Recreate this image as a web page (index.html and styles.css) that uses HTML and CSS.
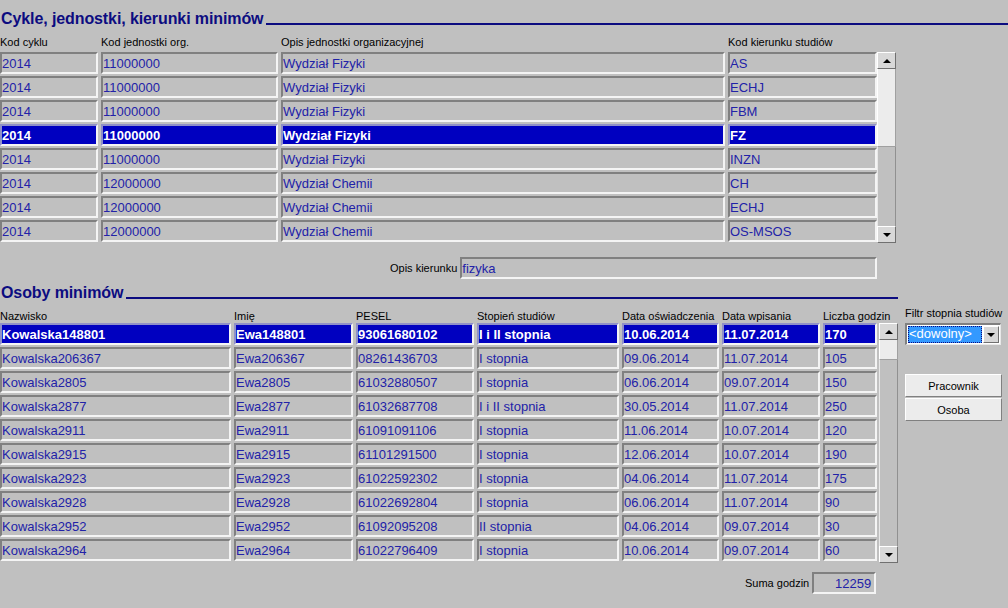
FILE: index.html
```html
<!DOCTYPE html>
<html lang="pl">
<head>
  <meta charset="UTF-8">
  <title>Cykle, jednostki, kierunki minimów</title>
  <link rel="stylesheet" href="styles.css">
</head>
<body>

<div class="section-title top-title">
  <span>Cykle, jednostki, kierunki minimów</span>
  <div class="title-line"></div>
</div>

<div class="block block-top">
  <div class="grid grid-top">
    <div class="hdr">Kod cyklu</div>
    <div class="hdr">Kod jednostki org.</div>
    <div class="hdr">Opis jednostki organizacyjnej</div>
    <div class="hdr">Kod kierunku studiów</div>

    <div class="fld">2014</div><div class="fld">11000000</div><div class="fld">Wydział Fizyki</div><div class="fld">AS</div>
    <div class="fld">2014</div><div class="fld">11000000</div><div class="fld">Wydział Fizyki</div><div class="fld">ECHJ</div>
    <div class="fld">2014</div><div class="fld">11000000</div><div class="fld">Wydział Fizyki</div><div class="fld">FBM</div>
    <div class="fld sel">2014</div><div class="fld sel">11000000</div><div class="fld sel">Wydział Fizyki</div><div class="fld sel">FZ</div>
    <div class="fld">2014</div><div class="fld">11000000</div><div class="fld">Wydział Fizyki</div><div class="fld">INZN</div>
    <div class="fld">2014</div><div class="fld">12000000</div><div class="fld">Wydział Chemii</div><div class="fld">CH</div>
    <div class="fld">2014</div><div class="fld">12000000</div><div class="fld">Wydział Chemii</div><div class="fld">ECHJ</div>
    <div class="fld">2014</div><div class="fld">12000000</div><div class="fld">Wydział Chemii</div><div class="fld">OS-MSOS</div>
  </div>

  <div class="scrollbar scroll-top">
    <div class="sb-btn"><span class="arrow-up"></span></div>
    <div class="sb-light sb-light-top"></div>
    <div class="sb-track"></div>
    <div class="sb-btn"><span class="arrow-down"></span></div>
  </div>
</div>

<div class="opis-row">
  <span class="lbl">Opis kierunku</span>
  <div class="fld opis-fld">fizyka</div>
</div>

<div class="section-title bottom-title">
  <span>Osoby minimów</span>
  <div class="title-line"></div>
</div>

<div class="block block-bottom">
  <div class="grid grid-bottom">
    <div class="hdr">Nazwisko</div>
    <div class="hdr">Imię</div>
    <div class="hdr">PESEL</div>
    <div class="hdr">Stopień studiów</div>
    <div class="hdr">Data oświadczenia</div>
    <div class="hdr">Data wpisania</div>
    <div class="hdr">Liczba godzin</div>

    <div class="fld sel">Kowalska148801</div><div class="fld sel">Ewa148801</div><div class="fld sel">93061680102</div><div class="fld sel">I i II stopnia</div><div class="fld sel">10.06.2014</div><div class="fld sel">11.07.2014</div><div class="fld sel">170</div>
    <div class="fld">Kowalska206367</div><div class="fld">Ewa206367</div><div class="fld">08261436703</div><div class="fld">I stopnia</div><div class="fld">09.06.2014</div><div class="fld">11.07.2014</div><div class="fld">105</div>
    <div class="fld">Kowalska2805</div><div class="fld">Ewa2805</div><div class="fld">61032880507</div><div class="fld">I stopnia</div><div class="fld">06.06.2014</div><div class="fld">09.07.2014</div><div class="fld">150</div>
    <div class="fld">Kowalska2877</div><div class="fld">Ewa2877</div><div class="fld">61032687708</div><div class="fld">I i II stopnia</div><div class="fld">30.05.2014</div><div class="fld">11.07.2014</div><div class="fld">250</div>
    <div class="fld">Kowalska2911</div><div class="fld">Ewa2911</div><div class="fld">61091091106</div><div class="fld">I stopnia</div><div class="fld">11.06.2014</div><div class="fld">10.07.2014</div><div class="fld">120</div>
    <div class="fld">Kowalska2915</div><div class="fld">Ewa2915</div><div class="fld">61101291500</div><div class="fld">I stopnia</div><div class="fld">12.06.2014</div><div class="fld">10.07.2014</div><div class="fld">190</div>
    <div class="fld">Kowalska2923</div><div class="fld">Ewa2923</div><div class="fld">61022592302</div><div class="fld">I stopnia</div><div class="fld">04.06.2014</div><div class="fld">11.07.2014</div><div class="fld">175</div>
    <div class="fld">Kowalska2928</div><div class="fld">Ewa2928</div><div class="fld">61022692804</div><div class="fld">I stopnia</div><div class="fld">06.06.2014</div><div class="fld">11.07.2014</div><div class="fld">90</div>
    <div class="fld">Kowalska2952</div><div class="fld">Ewa2952</div><div class="fld">61092095208</div><div class="fld">II stopnia</div><div class="fld">04.06.2014</div><div class="fld">09.07.2014</div><div class="fld">30</div>
    <div class="fld">Kowalska2964</div><div class="fld">Ewa2964</div><div class="fld">61022796409</div><div class="fld">I stopnia</div><div class="fld">10.06.2014</div><div class="fld">09.07.2014</div><div class="fld">60</div>
  </div>

  <div class="scrollbar scroll-bottom">
    <div class="sb-btn"><span class="arrow-up"></span></div>
    <div class="sb-light sb-light-bottom"></div>
    <div class="sb-track"></div>
    <div class="sb-btn"><span class="arrow-down"></span></div>
  </div>

  <div class="side-panel">
    <div class="hdr">Filtr stopnia studiów</div>
    <div class="combo">
      <div class="combo-val"><span>&lt;dowolny&gt;</span></div>
      <div class="combo-btn"><span class="arrow-down"></span></div>
    </div>
    <div class="buttons">
      <button class="btn">Pracownik</button>
      <button class="btn">Osoba</button>
    </div>
  </div>
</div>

<div class="suma-row">
  <span class="lbl">Suma godzin</span>
  <div class="fld suma-fld">12259</div>
</div>

</body>
</html>
```

FILE: styles.css
```css
body {
  margin: 0;
  padding: 0;
  background: #c0c0c0;
  font-family: "Liberation Sans", Arial, sans-serif;
  width: 1008px;
  height: 608px;
  overflow: hidden;
}

.section-title {
  display: flex;
  align-items: flex-end;
  color: #0c0c80;
  font-size: 16px;
  font-weight: bold;
}

.section-title span {
  white-space: nowrap;
  padding-left: 1px;
  line-height: 18px;
  letter-spacing: -0.1px;
}

.title-line {
  flex: 1;
  border-bottom: 2px solid #0c0c80;
  margin-bottom: 3px;
  margin-left: 3px;
}

.top-title {
  padding-top: 10px;
}

.bottom-title {
  margin-top: 5px;
}

.bottom-title .title-line {
  flex: 0 0 772px;
}

.block {
  display: flex;
  align-items: flex-start;
}

.block-top {
  margin-top: 7px;
}

.block-bottom {
  margin-top: 4px;
}

.grid {
  display: grid;
  column-gap: 3px;
  row-gap: 2px;
  grid-auto-rows: 22px;
}

.grid-top {
  grid-template-columns: 98px 177px 444px 149px;
  grid-template-rows: 15px;
}

.grid-bottom {
  grid-template-columns: 231px 119px 118px 142px 97px 98px 54px;
  grid-template-rows: 15px;
}

.hdr {
  font-size: 11px;
  color: #000;
  line-height: 14px;
  align-self: end;
  white-space: nowrap;
  padding-bottom: 1px;
}

.grid-bottom .hdr {
  padding-bottom: 0;
  margin-bottom: -2px;
}

.fld {
  box-sizing: border-box;
  height: 22px;
  background: #c0c0c0;
  border-top: 2px solid #808080;
  border-left: 2px solid #808080;
  border-bottom: 2px solid #f4f4f4;
  border-right: 2px solid #f4f4f4;
  color: #2222a8;
  font-size: 13px;
  line-height: 19px;
  padding-left: 0;
  white-space: nowrap;
  overflow: hidden;
}

.fld.sel {
  background: #0000c0;
  color: #fff;
  font-weight: bold;
  border-top-color: #9090c8;
  border-left-color: #9090c8;
}

.scrollbar {
  display: flex;
  flex-direction: column;
  width: 19px;
  box-sizing: border-box;
}

.scroll-top {
  margin-left: 0;
  margin-top: 17px;
  height: 191px;
}

.scroll-bottom {
  margin-left: 2px;
  margin-top: 17px;
  height: 240px;
}

.sb-btn {
  box-sizing: border-box;
  height: 17px;
  background: #d8d8d8;
  border-top: 1px solid #fff;
  border-left: 1px solid #fff;
  border-right: 1px solid #707070;
  border-bottom: 1px solid #707070;
  display: flex;
  align-items: center;
  justify-content: center;
}

.sb-light {
  background: #ececec;
  border-left: 1px solid #fff;
  border-right: 1px solid #a0a0a0;
  border-bottom: 1px solid #a0a0a0;
}

.sb-light-top {
  height: 77px;
}

.sb-light-bottom {
  height: 19px;
}

.sb-track {
  flex: 1;
  background: #c0c0c0;
  border-left: 1px solid #e8e8e8;
  border-right: 1px solid #909090;
}

.arrow-up {
  width: 0;
  height: 0;
  border-left: 4px solid transparent;
  border-right: 4px solid transparent;
  border-bottom: 4px solid #000;
}

.arrow-down {
  width: 0;
  height: 0;
  border-left: 4px solid transparent;
  border-right: 4px solid transparent;
  border-top: 4px solid #000;
}

.opis-row {
  display: flex;
  align-items: center;
  margin-top: 14px;
  padding-left: 390px;
  height: 22px;
}

.lbl {
  font-size: 11px;
  color: #000;
  margin-right: 3px;
  white-space: nowrap;
}

.opis-fld {
  width: 417px;
}

.side-panel {
  margin-left: 7px;
  display: flex;
  flex-direction: column;
}

.side-panel .hdr {
  height: 15px;
  line-height: 15px;
  margin-bottom: 2px;
  padding-bottom: 0;
}

.combo {
  display: flex;
  width: 96px;
  height: 22px;
  box-sizing: border-box;
  background: #fff;
  border-top: 2px solid #808080;
  border-left: 2px solid #808080;
  border-bottom: 1px solid #e8e8e8;
  border-right: 1px solid #e8e8e8;
  padding: 1px;
}

.combo-val {
  flex: 1;
  display: flex;
  align-items: center;
}

.combo-val span {
  display: block;
  box-sizing: border-box;
  width: 100%;
  height: 100%;
  background: #3399ff;
  color: #fff;
  font-size: 13px;
  line-height: 16px;
  padding-left: 1px;
  outline: 1px dotted #0c0c80;
  outline-offset: -1px;
}

.combo-btn {
  width: 16px;
  box-sizing: border-box;
  background: #d8d8d8;
  border-top: 1px solid #fff;
  border-left: 1px solid #fff;
  border-right: 1px solid #707070;
  border-bottom: 1px solid #707070;
  display: flex;
  align-items: center;
  justify-content: center;
  margin-left: 1px;
}

.buttons {
  margin-top: 29px;
  display: flex;
  flex-direction: column;
  gap: 1px;
}

.btn {
  all: unset;
  box-sizing: border-box;
  width: 97px;
  height: 23px;
  background: #ececec;
  border-top: 1px solid #fff;
  border-left: 1px solid #fff;
  border-right: 1px solid #808080;
  border-bottom: 1px solid #808080;
  font-family: "Liberation Sans", Arial, sans-serif;
  font-size: 11px;
  color: #000;
  text-align: center;
  cursor: pointer;
}

.suma-row {
  display: flex;
  align-items: center;
  margin-top: 9px;
  padding-left: 745px;
  height: 22px;
}

.suma-row .lbl {
  margin-right: 3px;
}

.suma-fld {
  width: 64px;
  text-align: right;
  padding-right: 3px;
}
```
